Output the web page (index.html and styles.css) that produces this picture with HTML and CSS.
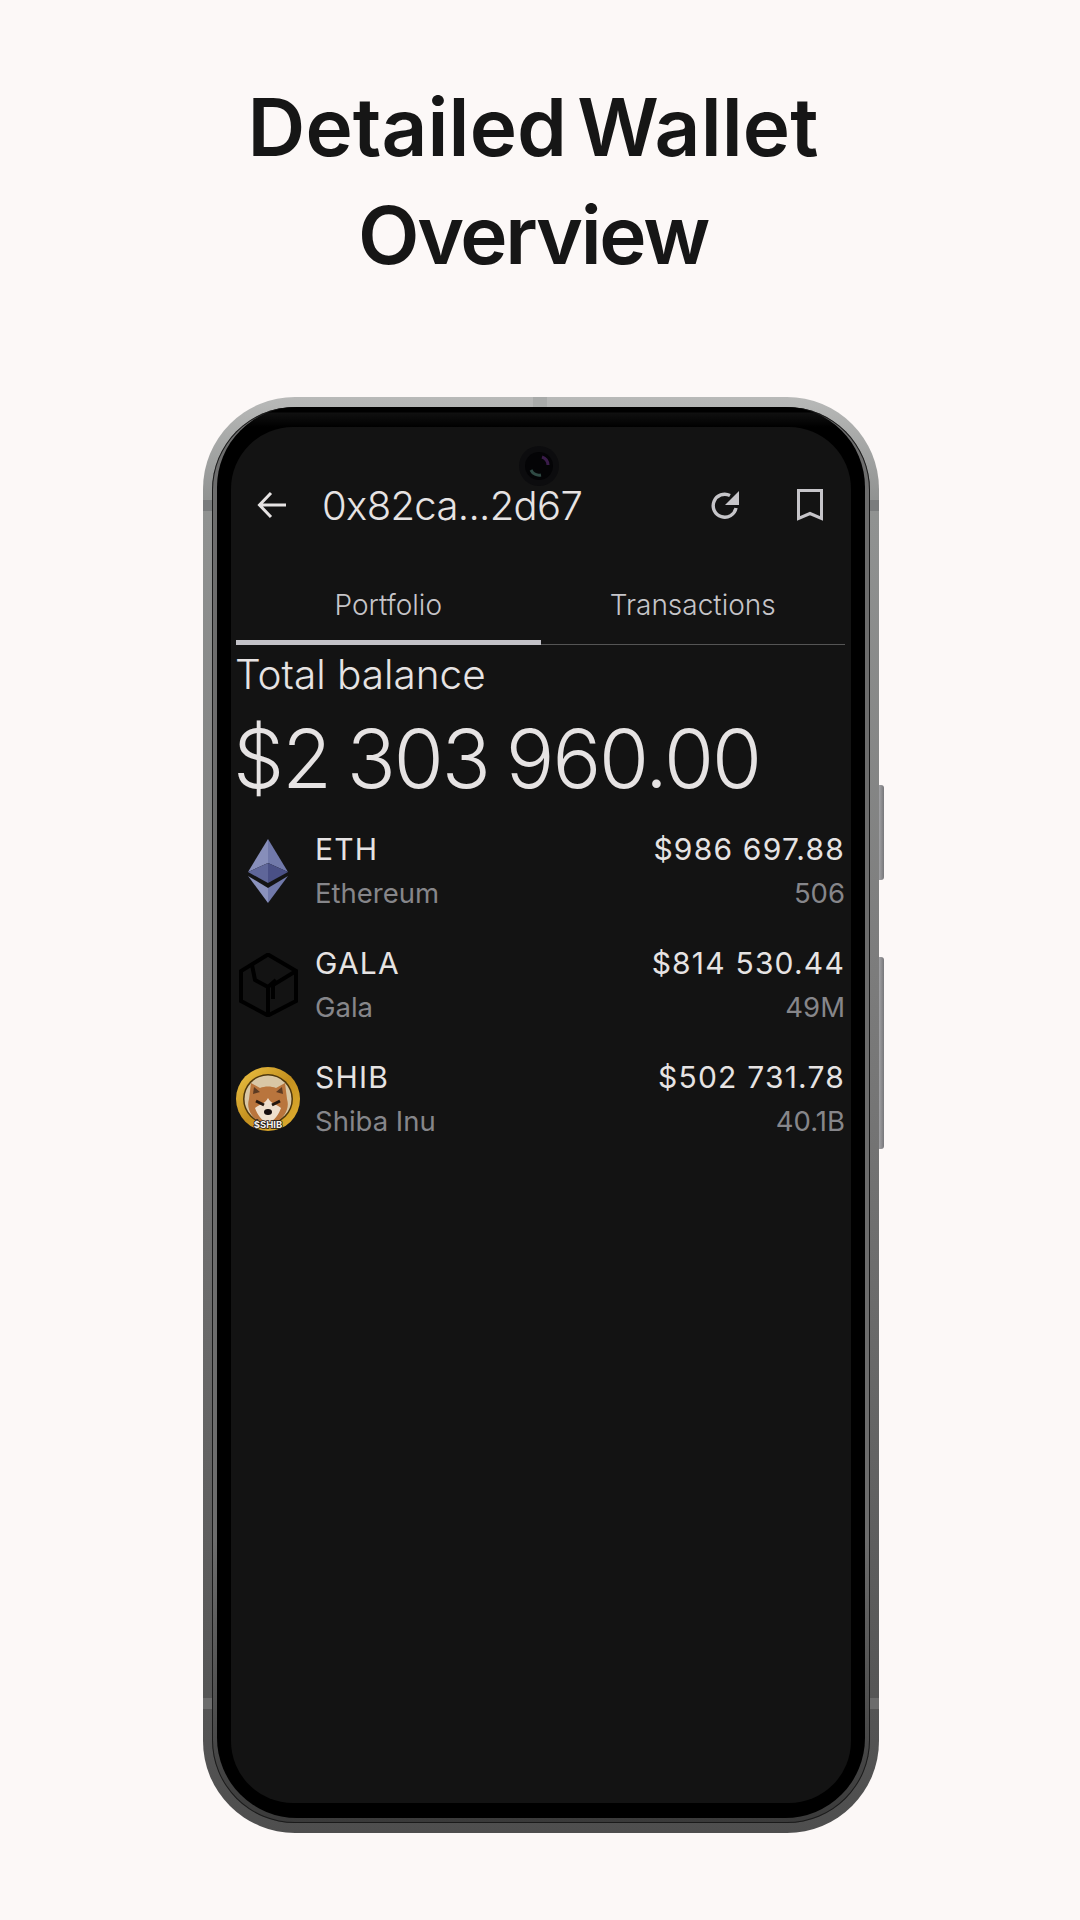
FILE: index.html
```html
<!DOCTYPE html>
<html lang="en">

<head>
    <meta charset="UTF-8">
    <meta name="viewport" content="width=device-width, initial-scale=1.0">
    <title>Detailed Wallet Overview</title>
    <link rel="stylesheet" href="styles.css">
</head>

<body>
    <h1 class="headline"><span class="headline-wide">Detailed Wallet</span><br>Overview</h1>

    <div class="phone">
        <span class="tick tick-top"></span>
        <span class="tick tick-left-a"></span>
        <span class="tick tick-left-b"></span>
        <span class="tick tick-right-a"></span>
        <span class="tick tick-right-b"></span>
        <span class="side-btn side-btn-power"></span>
        <span class="side-btn side-btn-volume"></span>

        <div class="rim">
            <div class="bezel">
                <span class="notch"></span>
                <svg class="camera" viewBox="0 0 40 40" width="40" height="40" fill="none">
                    <circle cx="20" cy="20" r="20" fill="#0c0c0e"/>
                    <circle cx="20" cy="20" r="14" fill="#040406"/>
                    <path d="M12 24A9 9 0 0 0 22 29" stroke="#2f4a44" stroke-width="3"/>
                    <path d="M23 11A9 9 0 0 1 29 19" stroke="#3a1c4a" stroke-width="3"/>
                </svg>

                <div class="screen">
                    <div class="appbar">
                        <svg class="back" viewBox="0 0 30 28" width="30" height="28" fill="none" stroke="#e6e3e3" stroke-width="3">
                            <path d="M29 14H3M14 2 2.500 14 14 26"/>
                        </svg>
                        <span class="address">0x82ca...2d67</span>
                        <svg class="refresh" viewBox="0 0 30 30" width="30" height="30" fill="none">
                            <path d="M26 18A11.500 11.500 0 1 1 20 5.500" stroke="#c6c5c9" stroke-width="3.400"/>
                            <path d="M29 1V15H15Z" fill="#c6c5c9"/>
                        </svg>
                        <svg class="bookmark" viewBox="0 0 26 32" width="26" height="32" fill="none" stroke="#c6c5c9" stroke-width="3">
                            <path d="M1.500 1.500H24.500V29.500L13 24.500 1.500 29.500Z"/>
                        </svg>
                    </div>

                    <div class="tabs">
                        <div class="tab tab-active">Portfolio</div>
                        <div class="tab">Transactions</div>
                    </div>

                    <div class="balance-label">Total balance</div>
                    <div class="balance">$2 303 960.00</div>

                    <div class="coin-list">
                        <div class="coin">
                            <div class="coin-icon">
                                <svg viewBox="0 0 40 64" width="40" height="64">
                                    <path d="M20 0 0 33 20 24Z" fill="#878eba"/>
                                    <path d="M20 0 40 33 20 24Z" fill="#7179aa"/>
                                    <path d="M20 24 0 33 20 44Z" fill="#5f6699"/>
                                    <path d="M20 24 40 33 20 44Z" fill="#4a5086"/>
                                    <path d="M0 37 20 64V49Z" fill="#8b92bd"/>
                                    <path d="M40 37 20 64V49Z" fill="#7179aa"/>
                                </svg>
                            </div>
                            <div class="coin-names">
                                <div class="coin-symbol">ETH</div>
                                <div class="coin-name">Ethereum</div>
                            </div>
                            <div class="coin-values">
                                <div class="coin-usd">$986 697.88</div>
                                <div class="coin-amount">506</div>
                            </div>
                        </div>

                        <div class="coin">
                            <div class="coin-icon">
                                <svg viewBox="0 0 60 64" width="60" height="64" fill="none" stroke="#000" stroke-width="4">
                                    <path d="M30 1.500 58 18V48L30 62.500 3 48V18Z"/>
                                    <path d="M14 12 17 27 30 34V62M30 34 38 27"/>
                                    <path d="M58 18 35 32V46"/>
                                </svg>
                            </div>
                            <div class="coin-names">
                                <div class="coin-symbol">GALA</div>
                                <div class="coin-name">Gala</div>
                            </div>
                            <div class="coin-values">
                                <div class="coin-usd">$814 530.44</div>
                                <div class="coin-amount">49M</div>
                            </div>
                        </div>

                        <div class="coin">
                            <div class="coin-icon">
                                <svg viewBox="0 0 64 64" width="64" height="64">
                                    <defs>
                                        <linearGradient id="gold" x1="0" y1="0" x2="1" y2="1">
                                            <stop offset="0" stop-color="#eec546"/>
                                            <stop offset="0.5" stop-color="#c4901f"/>
                                            <stop offset="1" stop-color="#e3b232"/>
                                        </linearGradient>
                                        <filter id="soft"><feGaussianBlur stdDeviation="0.700"/></filter>
                                    </defs>
                                    <circle cx="32" cy="32" r="32" fill="url(#gold)"/>
                                    <circle cx="32" cy="32" r="25" fill="#4e370c"/>
                                    <circle cx="32" cy="32" r="23.500" fill="#d9c7a6"/>
                                    <g filter="url(#soft)">
                                        <path d="M13 32 15 16 24 21C29 19 35 19 40 21L49 16 51 32C54 42 48 50 42 54H22C16 50 10 42 13 32Z" fill="#b9743c"/>
                                        <path d="M17 27 18 20 24 25ZM47 27 46 20 40 25Z" fill="#5c3a24"/>
                                        <path d="M32 31C29 37 22 38 19 41 21 47 26 55 32 55 38 55 43 47 45 41 42 38 35 37 32 31Z" fill="#eedfcd"/>
                                        <path d="M20 34 28 38M44 34 36 38" stroke="#20140c" stroke-width="3"/>
                                        <ellipse cx="32" cy="45" rx="4" ry="3" fill="#120c0a"/>
                                    </g>
                                    <text class="shib-label" x="32" y="61" text-anchor="middle">$SHIB</text>
                                </svg>
                            </div>
                            <div class="coin-names">
                                <div class="coin-symbol">SHIB</div>
                                <div class="coin-name">Shiba Inu</div>
                            </div>
                            <div class="coin-values">
                                <div class="coin-usd">$502 731.78</div>
                                <div class="coin-amount">40.1B</div>
                            </div>
                        </div>
                    </div>
                </div>
            </div>
        </div>
    </div>
</body>

</html>
```

FILE: styles.css
```css
* {
    box-sizing: border-box;
}

body {
    background-color: #fcf8f7;
    font-family: "Inter", "Liberation Sans", sans-serif;
    margin: 0;
    padding: 0;
    width: 1080px;
    height: 1920px;
    overflow: hidden;
}

.headline {
    color: #161616;
    font-size: 80px;
    font-weight: 600;
    line-height: 108px;
    letter-spacing: -2.300px;
    margin: 73px 0 0;
    padding-right: 14px;
    text-align: center;
}

.headline-wide {
    letter-spacing: 0.100px;
    word-spacing: -10px;
}

/* phone body */
.phone {
    position: relative;
    width: 676px;
    height: 1436px;
    margin: 108px 0 0 203px;
    padding: 10px 9px;
    border-radius: 92px;
    background: linear-gradient(180deg, #b8b9b8 0%, #919392 7%, #7c7c7c 40%, #666 70%, #4e4e4e 100%);
}

.rim {
    height: 100%;
    border-radius: 83px;
    background: linear-gradient(180deg, #050505 0%, #6d6d6d 1%, #6d6d6d 80%, #3a3a3a 100%);
    padding: 0 5px 5px;
    box-shadow: inset 0 0 0 1px #1a1a1a;
}

.bezel {
    position: relative;
    height: 100%;
    border-radius: 80px;
    background: linear-gradient(180deg, #000 0, #000 5px, #101010 6px, #000 20px);
    background-color: #020202;
    padding: 20px 14px 15px;
}

.screen {
    height: 100%;
    border-radius: 62px;
    background-color: #131313;
    padding: 58px 6px 0 5px;
}

.notch {
    position: absolute;
    top: 0;
    left: 125px;
    width: 388px;
    height: 5px;
    background-color: #000;
    border-radius: 0 0 12px 12px;
}

.camera {
    position: absolute;
    top: 39px;
    left: 302px;
}

.tick {
    position: absolute;
    background-color: #9a9c9b;
}

.tick-top {
    top: 0;
    left: 330px;
    width: 14px;
    height: 10px;
    background-color: #a9abaa;
}

.tick-left-a,
.tick-left-b,
.tick-right-a,
.tick-right-b {
    width: 9px;
    height: 11px;
    background-color: #7a7c7d;
}

.tick-left-a,
.tick-left-b {
    left: 0;
}

.tick-right-a,
.tick-right-b {
    right: 0;
}

.tick-left-a,
.tick-right-a {
    top: 103px;
}

.tick-left-b,
.tick-right-b {
    top: 1301px;
    background-color: #6c6c6c;
}

.side-btn {
    position: absolute;
    right: -5px;
    width: 5px;
    border-radius: 0 3px 3px 0;
    background: linear-gradient(90deg, #a2a2a5, #77777a);
}

.side-btn-power {
    top: 388px;
    height: 95px;
}

.side-btn-volume {
    top: 560px;
    height: 192px;
}

/* app bar */
.appbar {
    display: flex;
    align-items: center;
    height: 40px;
    padding-left: 21px;
}

.address {
    color: #e6e3e3;
    font-size: 40px;
    font-weight: 300;
    letter-spacing: -0.65px;
    margin-left: 35px;
    flex: 1;
    white-space: nowrap;
}

.bookmark {
    margin: 0 22px 0 57px;
}

/* tabs */
.tabs {
    display: flex;
    margin-top: 44px;
    border-bottom: 1px solid #555;
}

.tab {
    flex: 1;
    color: #c6c5c9;
    font-size: 28px;
    font-weight: 300;
    line-height: 34px;
    text-align: center;
    padding: 19px 0 22px;
}

.tab-active {
    box-shadow: 0 1px 0 0 #c3c2c8, inset 0 -4px 0 0 #c3c2c8;
}

/* balance */
.balance-label {
    color: #e6e3e3;
    font-size: 40.500px;
    font-weight: 300;
    line-height: 46px;
    margin-top: 7px;
    margin-left: -1px;
}

.balance {
    color: #e6e3e3;
    font-size: 81px;
    font-weight: 300;
    line-height: 100px;
    letter-spacing: -2px;
    word-spacing: -4px;
    margin-top: 11px;
    margin-left: -3px;
    white-space: nowrap;
}

/* coin rows */
.coin-list {
    display: flex;
    flex-direction: column;
    margin-top: 5px;
}

.coin {
    display: flex;
    align-items: center;
    height: 114px;
}

.coin-icon {
    display: flex;
    align-items: center;
    justify-content: center;
    width: 64px;
    height: 64px;
    margin-right: 15px;
}

.coin-names {
    flex: 1;
    padding-bottom: 4px;
}

.coin-values {
    text-align: right;
    padding-bottom: 4px;
}

.coin-symbol,
.coin-usd {
    color: #e6e3e3;
    font-size: 30px;
    font-weight: 400;
    line-height: 40px;
    letter-spacing: 1.200px;
}

.coin-name,
.coin-amount {
    color: #86868a;
    font-size: 27.500px;
    font-weight: 400;
    line-height: 34px;
    margin-top: 7px;
}

.shib-label {
    fill: #f6f2ec;
    stroke: #1b1614;
    stroke-width: 1.600px;
    paint-order: stroke;
    font-family: "Inter", sans-serif;
    font-size: 9.500px;
    font-weight: 700;
}
```
